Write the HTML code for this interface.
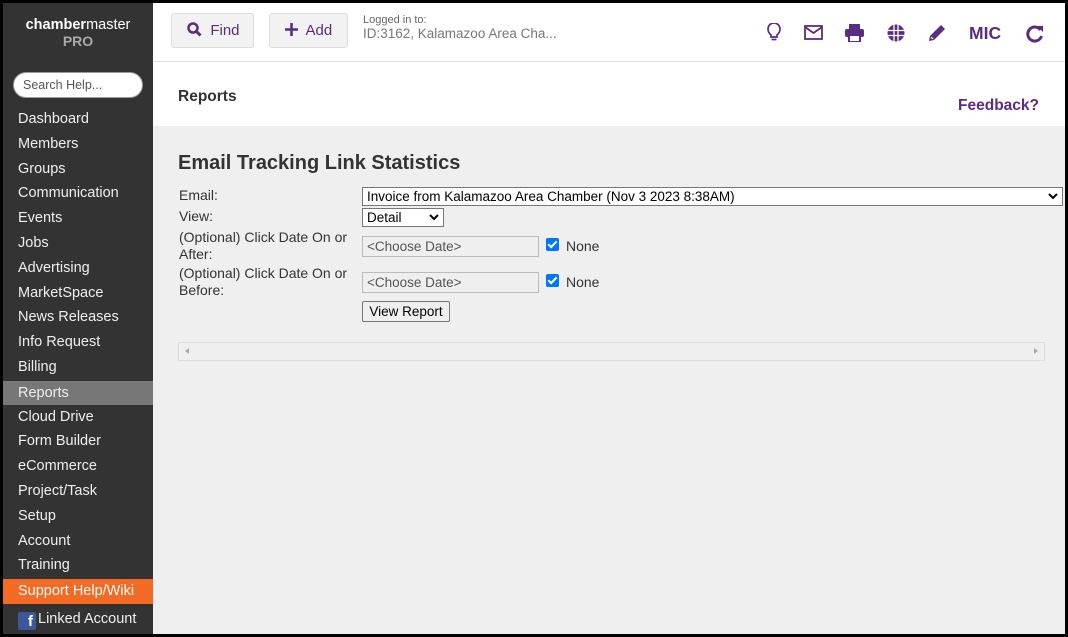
<!DOCTYPE html>
<html><head><meta charset="utf-8"><style>
*{box-sizing:border-box;margin:0;padding:0}
body{width:1068px;height:637px;background:#000;font-family:"Liberation Sans",Arial,sans-serif;position:relative;overflow:hidden}
.abs{position:absolute}
#side{left:3px;top:3px;width:150px;height:631px;background:#333}
#main{left:153px;top:3px;width:912px;height:631px;background:#efefef}
#top{left:153px;top:3px;width:912px;height:59px;background:#fff;border-bottom:1px solid #ddd}
#hdr{left:153px;top:62px;width:912px;height:64px;background:#fff}
.nav{position:absolute;left:3px;width:150px;height:24px;font-size:14.5px;line-height:24px;padding-left:15px;color:#eee}
.btn{position:absolute;top:13px;height:35px;background:#f2f2f2;border:1px solid #ddd;border-radius:3px;color:#5a2d82;font-size:15px;line-height:33px}
.lbl{position:absolute;left:179px;font-size:14px;color:#333;line-height:17px}
.inp{position:absolute;background:#fff;border:1px solid #767676;font-size:13.5px;color:#000}
.date{position:absolute;left:362px;width:177px;height:21px;background:#efefef;border:1px solid #bbb;color:#555;font-size:13.5px;line-height:19px;padding-left:4px}
.cb{position:absolute;left:546px;width:13px;height:13px;background:#0075ff;border-radius:2px}
.cb:after{content:"";position:absolute;left:4px;top:1px;width:3px;height:7px;border:solid #fff;border-width:0 2px 2px 0;transform:rotate(45deg)}
.none{position:absolute;left:566px;font-size:14px;color:#333}
.ic{position:absolute;top:23px}
</style></head><body>
<div id="side" class="abs"></div>
<div id="main" class="abs"></div>
<div id="top" class="abs"></div>
<div id="hdr" class="abs"></div>

<div class="abs" style="left:3px;top:17px;width:150px;text-align:center;color:#fff;font-size:14.5px;line-height:16px"><b>chamber</b>master<br><span style="color:#aaa;font-weight:bold;font-size:14px">PRO</span></div>
<div class="abs" style="left:13px;top:72px;width:130px;height:26px;background:#fff;border-radius:13px;border:1px solid #999;font-size:12.5px;color:#555;line-height:24px;padding-left:9px">Search Help...</div>

<div class="nav" style="top:107px">Dashboard</div>
<div class="nav" style="top:132px">Members</div>
<div class="nav" style="top:157px">Groups</div>
<div class="nav" style="top:181px">Communication</div>
<div class="nav" style="top:206px">Events</div>
<div class="nav" style="top:231px">Jobs</div>
<div class="nav" style="top:256px">Advertising</div>
<div class="nav" style="top:281px">MarketSpace</div>
<div class="nav" style="top:305px">News Releases</div>
<div class="nav" style="top:330px">Info Request</div>
<div class="nav" style="top:355px">Billing</div>
<div class="nav" style="top:381px;background:#777">Reports</div>
<div class="nav" style="top:405px">Cloud Drive</div>
<div class="nav" style="top:429px">Form Builder</div>
<div class="nav" style="top:454px">eCommerce</div>
<div class="nav" style="top:479px">Project/Task</div>
<div class="nav" style="top:504px">Setup</div>
<div class="nav" style="top:529px">Account</div>
<div class="nav" style="top:553px">Training</div>
<div class="nav" style="top:579px;height:25px;background:#f26a23;color:#fff">Support Help/Wiki</div>
<div class="nav" style="top:607px"><span style="display:inline-block;width:18px;height:18px;background:#3b5998;border-radius:2px;vertical-align:-3px;color:#fff;font-weight:bold;text-align:right;padding-right:3px;line-height:20px;font-size:15px;margin-right:2px">f</span>Linked Account</div>

<div class="btn" style="left:171px;width:83px;padding-left:15px"><svg width="15" height="15" viewBox="0 0 15 15" style="vertical-align:-2px"><circle cx="6" cy="6" r="4.5" fill="none" stroke="#5a2d82" stroke-width="2.5"/><path d="M9 9l4.5 4.5" stroke="#5a2d82" stroke-width="3"/></svg>&nbsp; Find</div>
<div class="btn" style="left:269px;width:79px;padding-left:15px"><svg width="13" height="13" viewBox="0 0 13 13" style="vertical-align:-1px"><path d="M6.5 0v13M0 6.5h13" stroke="#5a2d82" stroke-width="2.6"/></svg>&nbsp; Add</div>
<div class="abs" style="left:363px;top:14px;font-size:11px;color:#666">Logged in to:</div>
<div class="abs" style="left:363px;top:26px;font-size:13.5px;color:#777">ID:3162, Kalamazoo Area Cha...</div>

<svg class="ic" style="left:767px" width="14" height="20" viewBox="0 0 14 20"><path d="M4 12c-2-2-3-3-3-6a6 6 0 0112 0c0 3-1 4-3 6v2H4z" fill="none" stroke="#5a2d82" stroke-width="1.7"/><path d="M4.5 16.5h5" stroke="#5a2d82" stroke-width="1.7"/></svg>
<svg class="ic" style="left:804px;top:25px" width="19" height="15" viewBox="0 0 19 15"><rect x="1" y="1" width="17" height="13" fill="none" stroke="#5a2d82" stroke-width="1.8"/><path d="M1 2l8.5 6 8.5-6" fill="none" stroke="#5a2d82" stroke-width="1.8"/></svg>
<svg class="ic" style="left:845px;top:24px" width="19" height="18" viewBox="0 0 19 18"><rect x="4" y="0" width="11" height="5" fill="#5a2d82"/><rect x="0" y="5" width="19" height="8" rx="2" fill="#5a2d82"/><rect x="4" y="11" width="11" height="7" fill="#fff" stroke="#5a2d82" stroke-width="2"/></svg>
<svg class="ic" style="left:887px;top:24px" width="18" height="18" viewBox="0 0 18 18"><circle cx="9" cy="9" r="8.5" fill="#5a2d82"/><path d="M0 6.5h18M0 11.5h18M7 0v18M11 0v18" stroke="#fff" stroke-width="1.3"/></svg>
<svg class="ic" style="left:927px;top:23px" width="20" height="20" viewBox="0 0 20 20"><path d="M2 18l1-5L14 2l4 4L7 17z" fill="#5a2d82"/><path d="M4 14l2 2" stroke="#fff" stroke-width="1.2"/></svg>
<div class="abs" style="left:969px;top:23px;font-size:17.5px;font-weight:bold;color:#5a2d82">MIC</div>
<svg class="ic" style="left:1025px;top:24px" width="19" height="19" viewBox="0 0 19 19"><path d="M15.5 6A7 7 0 1016.5 12" fill="none" stroke="#5a2d82" stroke-width="3"/><path d="M12 2h6v6z" fill="#5a2d82"/></svg>

<div class="abs" style="left:178px;top:88px;font-size:15.5px;font-weight:bold;color:#333">Reports</div>
<div class="abs" style="left:900px;width:139px;text-align:right;top:97px;font-size:15.5px;font-weight:bold;color:#5a2d82">Feedback?</div>

<div class="abs" style="left:178px;top:152px;font-size:20px;font-weight:bold;color:#333">Email Tracking Link Statistics</div>

<div class="lbl" style="top:187px">Email:</div>
<div class="lbl" style="top:208px">View:</div>
<div class="lbl" style="top:229px">(Optional) Click Date On or<br>After:</div>
<div class="lbl" style="top:265px">(Optional) Click Date On or<br>Before:</div>

<div class="inp" style="left:362px;top:187px;width:701px;height:19px;line-height:17px;padding-left:4px">Invoice from Kalamazoo Area Chamber (Nov 3 2023 8:38AM)<svg style="position:absolute;right:4px;top:5px" width="10" height="7" viewBox="0 0 10 7"><path d="M1 1l4 4 4-4" fill="none" stroke="#000" stroke-width="2"/></svg></div>
<div class="inp" style="left:362px;top:208px;width:82px;height:19px;line-height:17px;padding-left:4px">Detail<svg style="position:absolute;right:4px;top:5px" width="10" height="7" viewBox="0 0 10 7"><path d="M1 1l4 4 4-4" fill="none" stroke="#000" stroke-width="2"/></svg></div>

<div class="date" style="top:236px">&lt;Choose Date&gt;</div>
<div class="cb" style="top:238px"></div><div class="none" style="top:238px">None</div>
<div class="date" style="top:272px">&lt;Choose Date&gt;</div>
<div class="cb" style="top:274px"></div><div class="none" style="top:274px">None</div>

<div class="abs" style="left:362px;top:301px;width:88px;height:21px;background:#efefef;border:1px solid #767676;border-radius:2px;font-size:13.5px;line-height:19px;text-align:center;color:#000">View Report</div>

<div class="abs" style="left:178px;top:342px;width:867px;height:19px;border:1px solid #ddd;background:#efefef"></div>
<div class="abs" style="left:185px;top:348px;width:0;height:0;border:3px solid transparent;border-right:4px solid #aaa;border-left:0"></div>
<div class="abs" style="left:1034px;top:348px;width:0;height:0;border:3px solid transparent;border-left:4px solid #aaa;border-right:0"></div>
</body></html>
